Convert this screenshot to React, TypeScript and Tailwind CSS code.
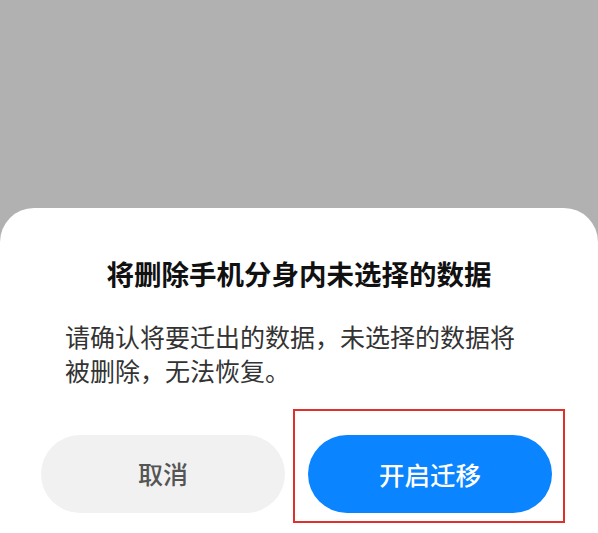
export default function App() {
  return (
    <div
      className="relative h-[533px] w-[598px] overflow-hidden bg-[#b1b1b1]"
      style={{ fontFamily: '"Noto Sans CJK SC", "Noto Sans", sans-serif' }}
    >
      <div className="h-[208px]" />
      <div className="h-[325px] rounded-t-[34px] bg-white">
        <h1 className="pt-[47px] text-center text-[27.5px] font-bold leading-[36px] text-[#111111]">
          将删除手机分身内未选择的数据
        </h1>
        <p className="mt-[28px] pl-[65px] pr-[60px] text-[25px] leading-[34px] text-[#333333]">
          请确认将要迁出的数据，未选择的数据将被删除，无法恢复。
        </p>
        <div className="mt-[48px] flex gap-[23px] pl-[41px]">
          <button className="h-[78px] w-[244px] rounded-full bg-[#f1f1f1] text-[25px] font-medium text-[#555555]">
            取消
          </button>
          <button className="h-[78px] w-[244px] rounded-full bg-[#0a84ff] text-[25.5px] font-medium text-white">
            开启迁移
          </button>
        </div>
      </div>

      {/* annotation box */}
      <div className="absolute left-[293px] top-[409px] h-[114px] w-[272px] border-2 border-[#e0302d]" />
    </div>
  );
}
